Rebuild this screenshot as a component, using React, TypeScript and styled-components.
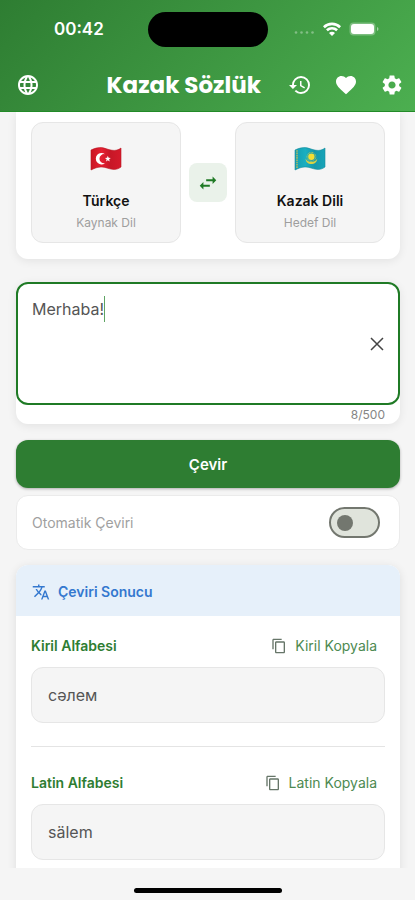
import React, { useState } from "react";
import styled, { createGlobalStyle } from "styled-components";
import {
  MdContentCopy,
  MdFavorite,
  MdHistory,
  MdLanguage,
  MdSettings,
  MdSwapHoriz,
  MdTranslate,
} from "react-icons/md";

const GlobalStyle = createGlobalStyle`
  *, *::before, *::after { box-sizing: border-box; }
  body { margin: 0; background: #f5f5f5; font-family: Inter, Roboto, sans-serif; }
  button, input, textarea { font-family: inherit; }
  h1, h2, h3, p { margin: 0; }
`;

const Screen = styled.div`
  display: flex;
  flex-direction: column;
  height: 100vh;
  background: #f5f5f5;
  color: #212121;
`;

const Header = styled.header`
  flex: none;
  background: linear-gradient(135deg, #2e7d32, #4caf50);
  border-bottom: 1px solid #228b28;
  color: #fff;
`;

const StatusBar = styled.div`
  display: grid;
  grid-template-columns: 1fr auto 1fr;
  align-items: center;
  height: 58px;
`;

const Clock = styled.time`
  justify-self: start;
  padding-left: 54px;
  font-size: 17px;
  line-height: 24px;
  font-weight: 600;
`;

const Island = styled.div`
  width: 120px;
  height: 35px;
  border-radius: 18px;
  background: #000;
`;

const StatusIcons = styled.div`
  display: flex;
  align-items: center;
  justify-content: flex-end;
  gap: 8px;
  padding-right: 36px;
  svg { display: block; }
`;

const AppBar = styled.div`
  display: flex;
  align-items: center;
  height: 53px;
`;

const Title = styled.h1`
  flex: 1;
  padding-right: 16px;
  text-align: right;
  white-space: nowrap;
  font-family: Poppins, Inter, sans-serif;
  font-size: 23px;
  line-height: 32px;
  font-weight: 700;
`;

const BarButton = styled.button<{ $wide?: boolean }>`
  display: grid;
  place-items: center;
  width: ${(p) => (p.$wide ? 55 : 46)}px;
  height: 46px;
  padding: 0;
  border: 0;
  background: none;
  color: #fff;
  font-size: 24px;
  cursor: pointer;
`;

const Main = styled.main`
  flex: 1;
  min-height: 0;
  overflow-y: auto;
  scrollbar-width: none;
  padding: 0 15px 16px 16px;
`;

const LanguageCard = styled.section`
  display: flex;
  align-items: center;
  gap: 8px;
  padding: 10px 15px 16px;
  border-radius: 0 0 12px 12px;
  background: #fff;
  box-shadow: 0 2px 10px rgba(0, 0, 0, 0.08);
`;

const LanguageButton = styled.button`
  flex: 1;
  display: flex;
  flex-direction: column;
  align-items: center;
  height: 121px;
  padding: 24px 8px 0;
  border: 1px solid #e6e6e6;
  border-radius: 12px;
  background: #f5f5f5;
  cursor: pointer;
  svg { display: block; }
`;

const LanguageName = styled.span`
  margin-top: 20px;
  font-size: 14px;
  line-height: 20px;
  font-weight: 600;
  color: #111;
`;

const LanguageRole = styled.span`
  margin-top: 3px;
  font-size: 12px;
  line-height: 18px;
  color: #9e9e9e;
`;

const SwapButton = styled.button`
  display: grid;
  place-items: center;
  width: 38px;
  height: 39px;
  padding: 0;
  border: 0;
  border-radius: 8px;
  background: #eaf2ea;
  color: #1f7a25;
  font-size: 22px;
  cursor: pointer;
`;

const InputCard = styled.section`
  margin-top: 23px;
  border-radius: 12px;
  background: #fff;
  box-shadow: 0 2px 10px rgba(0, 0, 0, 0.08);
`;

const Field = styled.div`
  position: relative;
  display: flex;
  align-items: center;
  height: 123px;
  border: 2px solid #1f7a25;
  border-radius: 12px;
`;

const SourceText = styled.textarea`
  flex: 1;
  align-self: stretch;
  min-width: 0;
  padding: 13px 0 13px 14px;
  border: 0;
  outline: 0;
  resize: none;
  background: none;
  color: #555;
  caret-color: transparent;
  font-size: 16px;
  line-height: 24px;
`;

const Caret = styled.span`
  position: absolute;
  top: 12px;
  left: 14px;
  display: flex;
  height: 26px;
  border-right: 1px solid #5fa463;
  font-size: 16px;
  pointer-events: none;
`;

const CaretOffset = styled.span`
  visibility: hidden;
  white-space: pre;
`;

const ClearButton = styled.button`
  display: grid;
  place-items: center;
  width: 42px;
  height: 42px;
  padding: 0;
  border: 0;
  background: none;
  color: #444;
  cursor: pointer;
`;

const Counter = styled.p`
  padding: 2px 15px 1px;
  text-align: right;
  font-size: 12px;
  line-height: 16px;
  color: #858585;
`;

const TranslateButton = styled.button`
  display: block;
  width: 100%;
  height: 48px;
  margin-top: 16px;
  border: 0;
  border-radius: 12px;
  background: #2e7d32;
  box-shadow: 0 1px 3px rgba(0, 0, 0, 0.3);
  color: #fff;
  font-size: 15px;
  font-weight: 600;
  cursor: pointer;
`;

const ToggleCard = styled.label`
  display: flex;
  align-items: center;
  justify-content: space-between;
  height: 55px;
  margin-top: 7px;
  padding: 0 19px 0 15px;
  border: 1px solid #ebebeb;
  border-radius: 12px;
  background: #fff;
  color: #a0a0a0;
  font-size: 14px;
`;

const Switch = styled.input`
  appearance: none;
  display: flex;
  align-items: center;
  width: 51px;
  height: 31px;
  margin: 0;
  padding: 0 6px;
  border: 2px solid #73776f;
  border-radius: 16px;
  background: #e0e4dc;
  cursor: pointer;
  &::before {
    content: "";
    width: 16px;
    height: 16px;
    border-radius: 50%;
    background: #73776f;
  }
  &:checked {
    justify-content: flex-end;
    background: #2e7d32;
    border-color: #2e7d32;
  }
  &:checked::before { background: #fff; }
`;

const ResultCard = styled.section`
  margin-top: 15px;
  padding-bottom: 24px;
  border-radius: 12px;
  background: #fff;
  box-shadow: 0 2px 10px rgba(0, 0, 0, 0.1);
`;

const ResultHeader = styled.div`
  display: flex;
  align-items: center;
  gap: 8px;
  height: 51px;
  padding: 2px 16px 0;
  border-radius: 12px 12px 0 0;
  background: #e6f0fa;
  color: #3478cf;
  font-size: 18px;
`;

const ResultTitle = styled.h2`
  font-size: 14px;
  line-height: 20px;
  font-weight: 600;
`;

const ResultBody = styled.div`
  padding: 16px 15px 0;
`;

const ResultRow = styled.div`
  display: flex;
  align-items: center;
  justify-content: space-between;
  height: 28px;
`;

const ScriptName = styled.h3`
  font-size: 14px;
  line-height: 20px;
  font-weight: 600;
  color: #2e7d32;
`;

const CopyButton = styled.button`
  display: flex;
  align-items: center;
  gap: 8px;
  padding: 0 8px;
  border: 0;
  background: none;
  color: #4d8a51;
  font-size: 14px;
  line-height: 20px;
  font-weight: 400;
  cursor: pointer;
  svg { font-size: 16px; color: #667568; }
`;

const ResultBox = styled.p`
  margin-top: 7px;
  padding: 16px;
  border: 1px solid #e6e6e6;
  border-radius: 12px;
  background: #f5f5f5;
  color: #555;
  font-size: 16px;
  line-height: 22px;
`;

const Divider = styled.hr`
  height: 1px;
  margin: 23px 0 22px;
  border: 0;
  background: #e4e4e4;
`;

const HomeArea = styled.footer`
  flex: none;
  display: flex;
  justify-content: center;
  height: 32px;
  padding-top: 20px;
`;

const HomeIndicator = styled.div`
  width: 148px;
  height: 5px;
  border-radius: 3px;
  background: #000;
`;

const FLAG = "M1 3C8 0 11 0 17 2S27 4 31 1V20C27 23 23 23 17 21S7 20 1 23Z";

function TurkishFlag() {
  return (
    <svg width="32" height="24" viewBox="0 0 32 24" aria-hidden="true">
      <defs>
        <linearGradient id="tr-cloth">
          <stop offset="0" stopColor="#c91422" />
          <stop offset=".35" stopColor="#e52032" />
          <stop offset=".65" stopColor="#c71727" />
          <stop offset="1" stopColor="#d51a2b" />
        </linearGradient>
      </defs>
      <path d={FLAG} fill="url(#tr-cloth)" stroke="#b81522" strokeWidth=".6" />
      <path d="M15 7.2A5.7 5.7 0 1 0 15 16.2A4.6 4.6 0 1 1 15 7.2Z" fill="#fff" />
      <path d="M17.8 8.8l.8 2 2.2.1-1.7 1.4.6 2.1-1.9-1.2-1.8 1.2.6-2.1-1.7-1.4 2.2-.1z" fill="#fff" />
    </svg>
  );
}

function KazakhFlag() {
  return (
    <svg width="32" height="24" viewBox="0 0 32 24" aria-hidden="true">
      <defs>
        <linearGradient id="kz-cloth">
          <stop offset="0" stopColor="#149db0" />
          <stop offset=".35" stopColor="#1aafc1" />
          <stop offset=".65" stopColor="#1597ab" />
          <stop offset="1" stopColor="#17a4b8" />
        </linearGradient>
      </defs>
      <path d={FLAG} fill="url(#kz-cloth)" stroke="#168c9c" strokeWidth=".6" />
      <path d="M3 3.2V21.6" stroke="#a9b865" strokeWidth="1.6" strokeDasharray="1.6 .7" />
      <circle cx="17.4" cy="9.8" r="3.2" fill="#f5de32" />
      <circle cx="17.4" cy="9.8" r="4.4" fill="none" stroke="#d9d344" strokeWidth=".9" strokeDasharray=".8 .7" />
      <path d="M11.5 11.5c.6 4.3 3 5.5 5.9 5.5s5.3-1.2 5.9-5.5c-1.6 2.7-3.5 3.3-5.9 3.3s-4.3-.6-5.9-3.3z" fill="#d9d344" />
    </svg>
  );
}

function Signal() {
  return (
    <svg width="21" height="12" viewBox="0 0 21 12" fill="#fff" fillOpacity=".35" aria-hidden="true">
      <circle cx="2" cy="9.5" r="1.3" />
      <circle cx="7.5" cy="9.5" r="1.3" />
      <circle cx="13" cy="9.5" r="1.3" />
      <circle cx="18.5" cy="9.5" r="1.3" />
    </svg>
  );
}

function Wifi() {
  return (
    <svg width="18" height="14" viewBox="0 0 18 14" aria-hidden="true">
      <g fill="none" stroke="#fff" strokeWidth="2.6">
        <path d="M.9 5.2C5.4.8 12.6.8 17.1 5.2" />
        <path d="M3.9 8.3C6.8 5.6 11.2 5.6 14.1 8.3" />
      </g>
      <path d="M9 14L6 10.900C7.700 9.500 10.300 9.500 12 10.900Z" fill="#fff" />
    </svg>
  );
}

function Battery() {
  return (
    <svg width="30" height="14" viewBox="0 0 30 14" aria-hidden="true">
      <rect x=".5" y=".5" width="26" height="13" rx="4" fill="#fff" fillOpacity=".3" />
      <rect x="2" y="2" width="23" height="10" rx="3" fill="#fff" />
      <path d="M28 5c2 .8 2 3.2 0 4z" fill="#fff" fillOpacity=".5" />
    </svg>
  );
}

function Cross() {
  return (
    <svg width="14" height="14" viewBox="0 0 14 14" aria-hidden="true">
      <path d="M1 1L13 13M13 1L1 13" stroke="currentColor" strokeWidth="1.5" />
    </svg>
  );
}

const results = [
  { name: "Kiril Alfabesi", copy: "Kiril Kopyala", text: "сәлем", lang: "kk-Cyrl" },
  { name: "Latin Alfabesi", copy: "Latin Kopyala", text: "sälem", lang: "kk-Latn" },
];

export default function App() {
  const [text, setText] = useState("Merhaba!");
  const [auto, setAuto] = useState(false);

  return (
    <Screen>
      <GlobalStyle />
      <Header>
        <StatusBar>
          <Clock>00:42</Clock>
          <Island />
          <StatusIcons>
            <Signal />
            <Wifi />
            <Battery />
          </StatusIcons>
        </StatusBar>
        <AppBar>
          <BarButton $wide aria-label="Dil"><MdLanguage /></BarButton>
          <Title>Kazak Sözlük</Title>
          <BarButton aria-label="Geçmiş"><MdHistory /></BarButton>
          <BarButton aria-label="Favoriler"><MdFavorite /></BarButton>
          <BarButton aria-label="Ayarlar"><MdSettings /></BarButton>
        </AppBar>
      </Header>
      <Main>
        <LanguageCard>
          <LanguageButton>
            <TurkishFlag />
            <LanguageName>Türkçe</LanguageName>
            <LanguageRole>Kaynak Dil</LanguageRole>
          </LanguageButton>
          <SwapButton aria-label="Dilleri değiştir"><MdSwapHoriz /></SwapButton>
          <LanguageButton>
            <KazakhFlag />
            <LanguageName>Kazak Dili</LanguageName>
            <LanguageRole>Hedef Dil</LanguageRole>
          </LanguageButton>
        </LanguageCard>
        <InputCard>
          <Field>
            <SourceText
              aria-label="Metin"
              maxLength={500}
              value={text}
              onChange={(e) => setText(e.target.value)}
            />
            <Caret aria-hidden="true"><CaretOffset>{text}</CaretOffset></Caret>
            <ClearButton aria-label="Temizle" onClick={() => setText("")}><Cross /></ClearButton>
          </Field>
          <Counter>{text.length}/500</Counter>
        </InputCard>
        <TranslateButton>Çevir</TranslateButton>
        <ToggleCard>
          Otomatik Çeviri
          <Switch type="checkbox" checked={auto} onChange={(e) => setAuto(e.target.checked)} />
        </ToggleCard>
        <ResultCard>
          <ResultHeader>
            <MdTranslate />
            <ResultTitle>Çeviri Sonucu</ResultTitle>
          </ResultHeader>
          <ResultBody>
            {results.map((r, i) => (
              <React.Fragment key={r.lang}>
                {i > 0 && <Divider />}
                <ResultRow>
                  <ScriptName>{r.name}</ScriptName>
                  <CopyButton><MdContentCopy />{r.copy}</CopyButton>
                </ResultRow>
                <ResultBox lang={r.lang}>{r.text}</ResultBox>
              </React.Fragment>
            ))}
          </ResultBody>
        </ResultCard>
      </Main>
      <HomeArea><HomeIndicator /></HomeArea>
    </Screen>
  );
}
